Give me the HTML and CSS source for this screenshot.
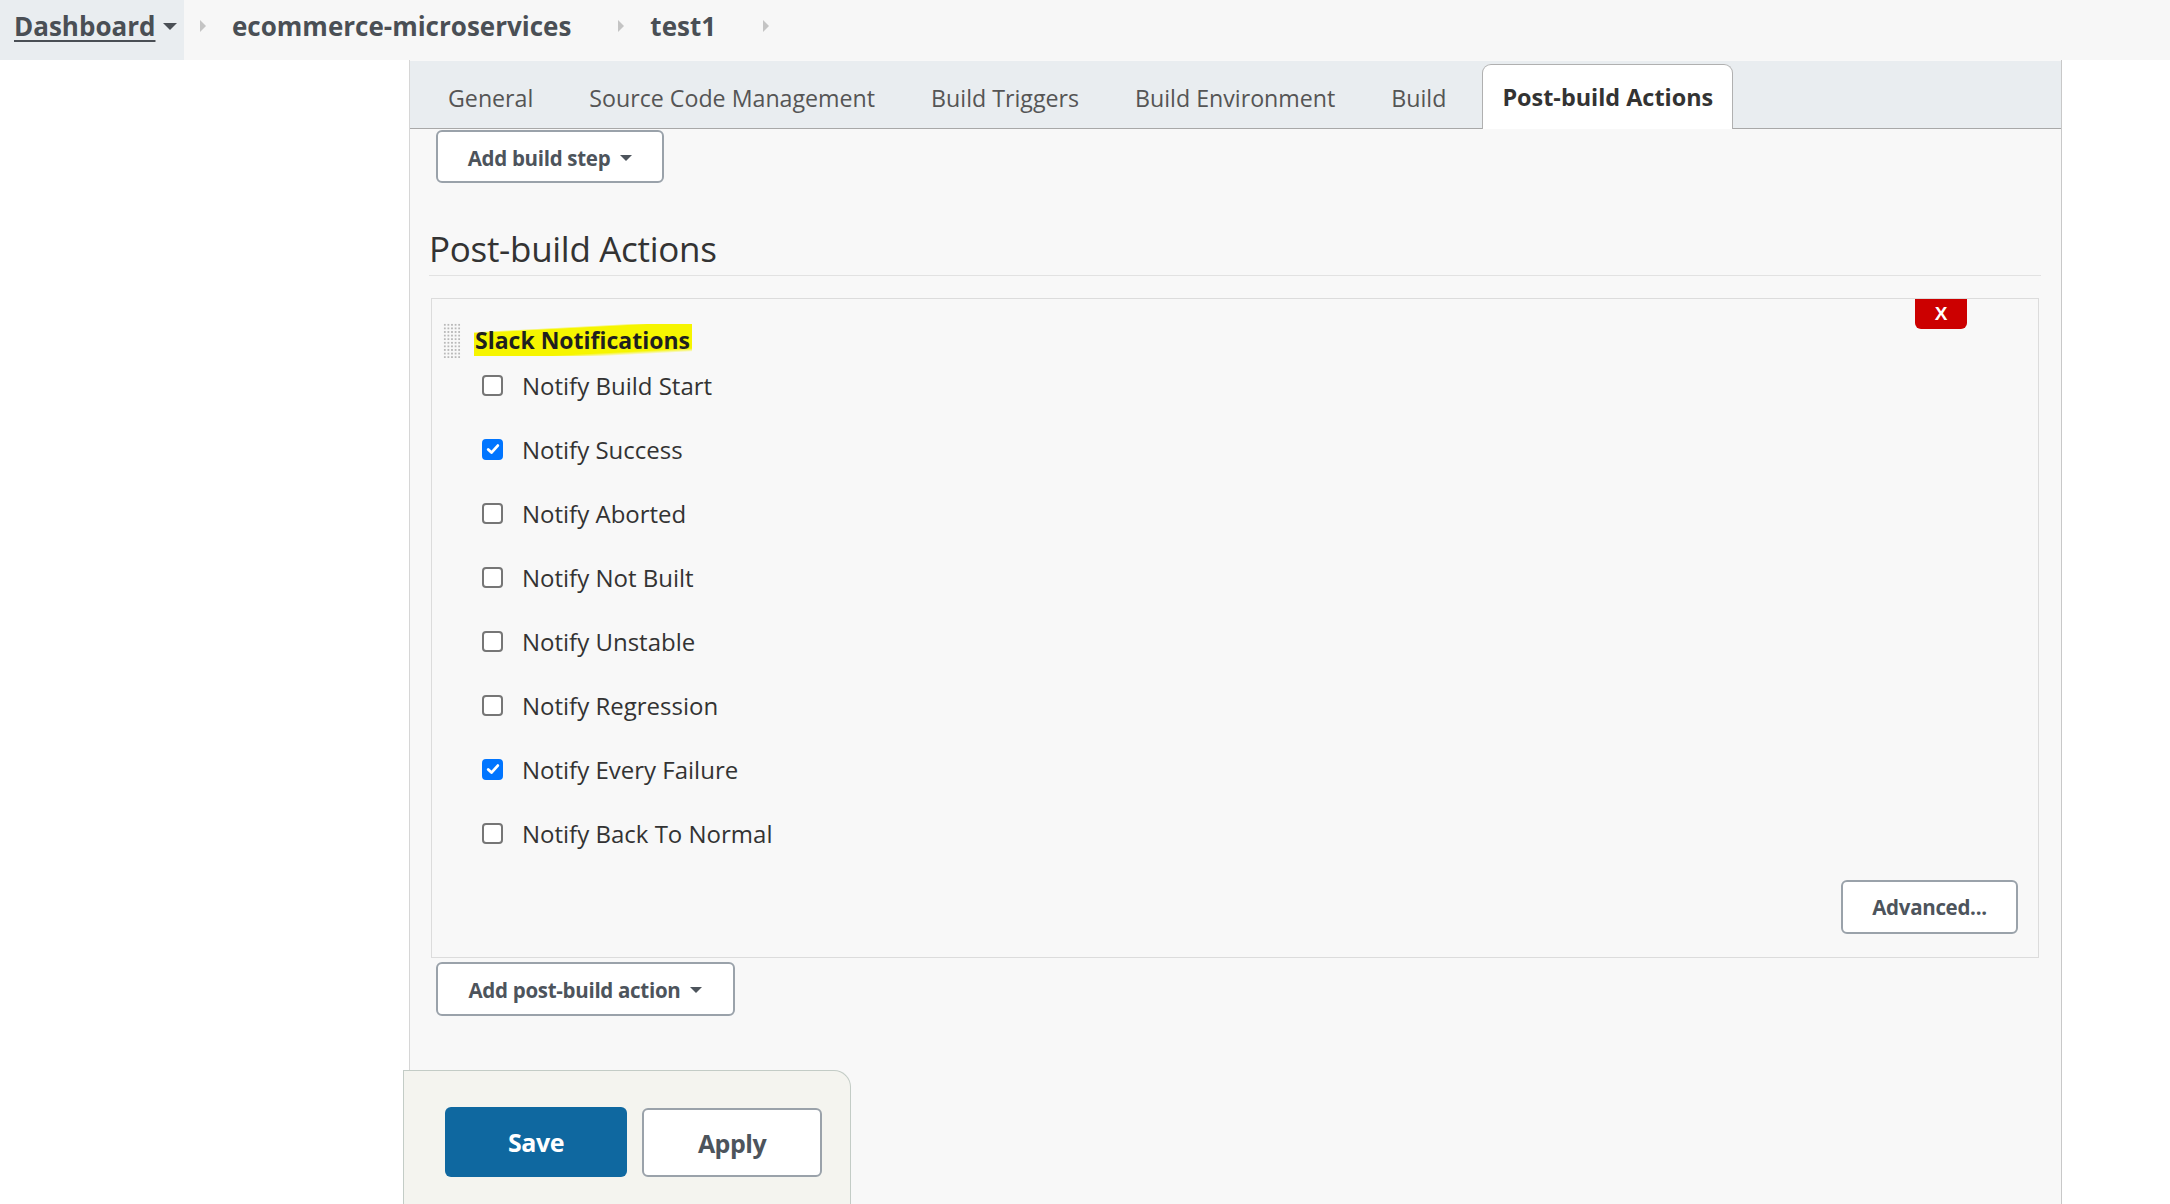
FILE: index.html
```html
<!DOCTYPE html>
<html>
<head>
<meta charset="utf-8">
<link rel="stylesheet" href="styles.css">
</head>
<body>
<div class="breadcrumb">
  <div class="crumb-home"><a class="crumb-link">Dashboard</a><span class="caret"></span></div>
  <span class="chev"></span>
  <span class="crumb">ecommerce-microservices</span>
  <span class="chev"></span>
  <span class="crumb">test1</span>
  <span class="chev"></span>
</div>
<div class="page">
  <div class="sidebar"></div>
  <div class="panel">
    <div class="tabs">
      <div class="tab">General</div>
      <div class="tab">Source Code Management</div>
      <div class="tab">Build Triggers</div>
      <div class="tab">Build Environment</div>
      <div class="tab">Build</div>
      <div class="tab active">Post-build Actions</div>
    </div>
    <div class="content">
      <button class="btn btn-drop btn-step">Add build step<span class="btn-caret"></span></button>
      <h2 class="section-title">Post-build Actions</h2>
      <div class="repeated">
        <button class="btn-delete">X</button>
        <div class="chunk-header">
          <span class="handle"></span>
          <span class="chunk-title">Slack Notifications</span>
        </div>
        <div class="checks">
          <div class="row"><span class="cb"></span><span class="label">Notify Build Start</span></div>
          <div class="row"><span class="cb checked"><svg viewBox="0 0 16 16" width="16" height="16"><path d="M3.2 8.4 L6.5 11.6 L12.8 4.6" fill="none" stroke="#fff" stroke-width="2.8" stroke-linecap="round" stroke-linejoin="round"/></svg></span><span class="label">Notify Success</span></div>
          <div class="row"><span class="cb"></span><span class="label">Notify Aborted</span></div>
          <div class="row"><span class="cb"></span><span class="label">Notify Not Built</span></div>
          <div class="row"><span class="cb"></span><span class="label">Notify Unstable</span></div>
          <div class="row"><span class="cb"></span><span class="label">Notify Regression</span></div>
          <div class="row"><span class="cb checked"><svg viewBox="0 0 16 16" width="16" height="16"><path d="M3.2 8.4 L6.5 11.6 L12.8 4.6" fill="none" stroke="#fff" stroke-width="2.8" stroke-linecap="round" stroke-linejoin="round"/></svg></span><span class="label">Notify Every Failure</span></div>
          <div class="row"><span class="cb"></span><span class="label">Notify Back To Normal</span></div>
        </div>
        <div class="adv-row"><button class="btn btn-adv">Advanced...</button></div>
      </div>
      <button class="btn btn-drop btn-post">Add post-build action<span class="btn-caret"></span></button>
    </div>
    <div class="bottom-bar">
      <button class="btn-save">Save</button>
      <button class="btn-apply">Apply</button>
    </div>
  </div>
</div>
</body>
</html>
```
FILE: styles.css
```css
* { box-sizing: border-box; }
html, body { margin: 0; padding: 0; }
body {
  font-family: "Open Sans", "Noto Sans", sans-serif;
  background: #ffffff;
  color: #333;
  width: 2170px;
  height: 1204px;
  overflow: hidden;
}
.breadcrumb {
  height: 60px;
  background: #f7f7f7;
  display: flex;
  align-items: center;
  padding-bottom: 8px;
}
.crumb-home {
  height: 60px;
  margin-bottom: -8px;
  padding-bottom: 8px;
  width: 184px;
  background: #e9edf0;
  display: flex;
  align-items: center;
  padding-left: 14px;
}
.crumb-link {
  font-weight: 700;
  font-size: 26px;
  color: #4a4f55;
  text-decoration: underline;
  text-underline-offset: 4px;
  text-decoration-thickness: 2px;
}
.caret {
  width: 0; height: 0;
  margin-left: 8px;
  border-left: 7px solid transparent;
  border-right: 7px solid transparent;
  border-top: 7px solid #4a4f55;
}
.chev {
  width: 0; height: 0;
  border-top: 6px solid transparent;
  border-bottom: 6px solid transparent;
  border-left: 6px solid #c4c4c4;
  margin: 0 26px 0 47px;
}
.crumb-home + .chev { margin-left: 16px; }
.crumb {
  font-weight: 700;
  font-size: 26px;
  color: #4a4f55;
}
.page {
  display: flex;
  height: 1144px;
}
.sidebar {
  width: 409px;
  flex: none;
}
.panel {
  width: 1653px;
  flex: none;
  background: #f8f8f8;
  border-left: 1px solid #d6d6d6;
  border-right: 1px solid #c8c8c8;
  display: flex;
  flex-direction: column;
}
.tabs {
  margin-top: 1px;
  height: 68px;
  background: #e9edf0;
  border-bottom: 1px solid #a8a8a8;
  display: flex;
  align-items: flex-end;
  padding-left: 18px;
  gap: 16px;
}
.tab {
  height: 64px;
  padding: 0 19px;
  display: flex;
  align-items: center;
  font-size: 23.2px;
  color: #555;
  letter-spacing: 0;
  margin-bottom: -1px;
  border: 1px solid transparent;
  border-bottom: none;
}
.tab.active {
  background: #fff;
  border-color: #b0b0b0;
  border-radius: 9px 9px 0 0;
  font-weight: 700;
  color: #333;
  height: 65px;
  font-size: 23.4px;
}
.content {
  padding: 0 20px 0 20px;
}
.btn {
  background: #fff;
  border: 2px solid #9aa2aa;
  border-radius: 6px;
  font-family: inherit;
  font-weight: 700;
  color: #4d545c;
  font-size: 20.5px;
  letter-spacing: -0.3px;
  display: flex;
  align-items: center;
  justify-content: center;
  padding: 0;
}
.btn-step {
  margin-left: 6px;
  width: 228px;
  height: 53px;
  margin-top: 1px;
  padding-top: 2px;
}
.btn-caret {
  width: 0; height: 0;
  margin-left: 10px;
  border-left: 6px solid transparent;
  border-right: 6px solid transparent;
  border-top: 6px solid #4d545c;
}
.section-title {
  margin: 45px 0 0 -1px;
  font-weight: 400;
  font-size: 35px;
  line-height: 42px;
  color: #333;
  padding-bottom: 5px;
  border-bottom: 1px solid #e2e2e2;
  letter-spacing: -0.3px;
}
.repeated {
  position: relative;
  margin: 22px 2px 0 1px;
  border: 1px solid #dcdcdc;
  background: #f8f8f8;
  height: 660px;
}
.btn-delete {
  position: absolute;
  top: 0;
  right: 71px;
  width: 52px;
  height: 30px;
  background: #cc0000;
  color: #fff;
  border: none;
  border-radius: 0 0 6px 6px;
  font-family: "Liberation Sans", Arial, sans-serif;
  font-weight: 700;
  font-size: 19px;
  padding: 0;
}
.chunk-header {
  display: flex;
  align-items: center;
  height: 36px;
  margin-top: 23px;
  padding-left: 11px;
}
.handle {
  width: 18px;
  height: 35px;
  background-image: radial-gradient(circle, #b9b9b9 0.9px, transparent 1.3px);
  background-size: 3.6px 3.6px;
  margin-right: 13px;
}
.chunk-title {
  font-weight: 700;
  font-size: 23px;
  color: #1f1f1f;
  padding: 0 2px 0 1px;
  background: linear-gradient(177deg, transparent 0%, transparent 18%, #f6f500 22%, #f6f500 82%, transparent 90%);
}
.checks {
  display: flex;
  flex-direction: column;
  padding-left: 50px;
  margin-top: -5px;
}
.row {
  height: 64px;
  display: flex;
  align-items: center;
}
.cb {
  width: 21px;
  height: 21px;
  border: 2px solid #767676;
  border-radius: 4px;
  background: #fff;
  margin-right: 19px;
  display: flex;
  align-items: center;
  justify-content: center;
}
.cb.checked {
  background: #0075ff;
  border-color: #0075ff;
}
.label {
  font-size: 24px;
  color: #333;
}
.adv-row {
  display: flex;
  justify-content: flex-end;
  padding-right: 20px;
  margin-top: 15px;
}
.btn-adv {
  width: 177px;
  height: 54px;
}
.btn-post {
  margin: 4px 0 0 6px;
  width: 299px;
  height: 54px;
  padding-top: 2px;
}
.bottom-bar {
  margin: 54px 0 0 -7px;
  width: 448px;
  flex: 1;
  background: #f4f4ef;
  border: 1px solid #c3ccc6;
  border-bottom: none;
  border-radius: 0 17px 0 0;
  display: flex;
  align-items: flex-start;
  padding: 36px 0 0 41px;
  gap: 15px;
}
.btn-save {
  width: 182px;
  height: 70px;
  background: #0f68a0;
  color: #fff;
  border: none;
  border-radius: 6px;
  font-family: inherit;
  font-weight: 700;
  font-size: 25px;
  letter-spacing: -0.5px;
}
.btn-apply {
  width: 180px;
  height: 69px;
  margin-top: 1px;
  background: #fff;
  color: #4d545c;
  border: 2px solid #9aa2aa;
  border-radius: 6px;
  font-family: inherit;
  font-weight: 700;
  font-size: 25px;
  letter-spacing: -0.5px;
}
```
